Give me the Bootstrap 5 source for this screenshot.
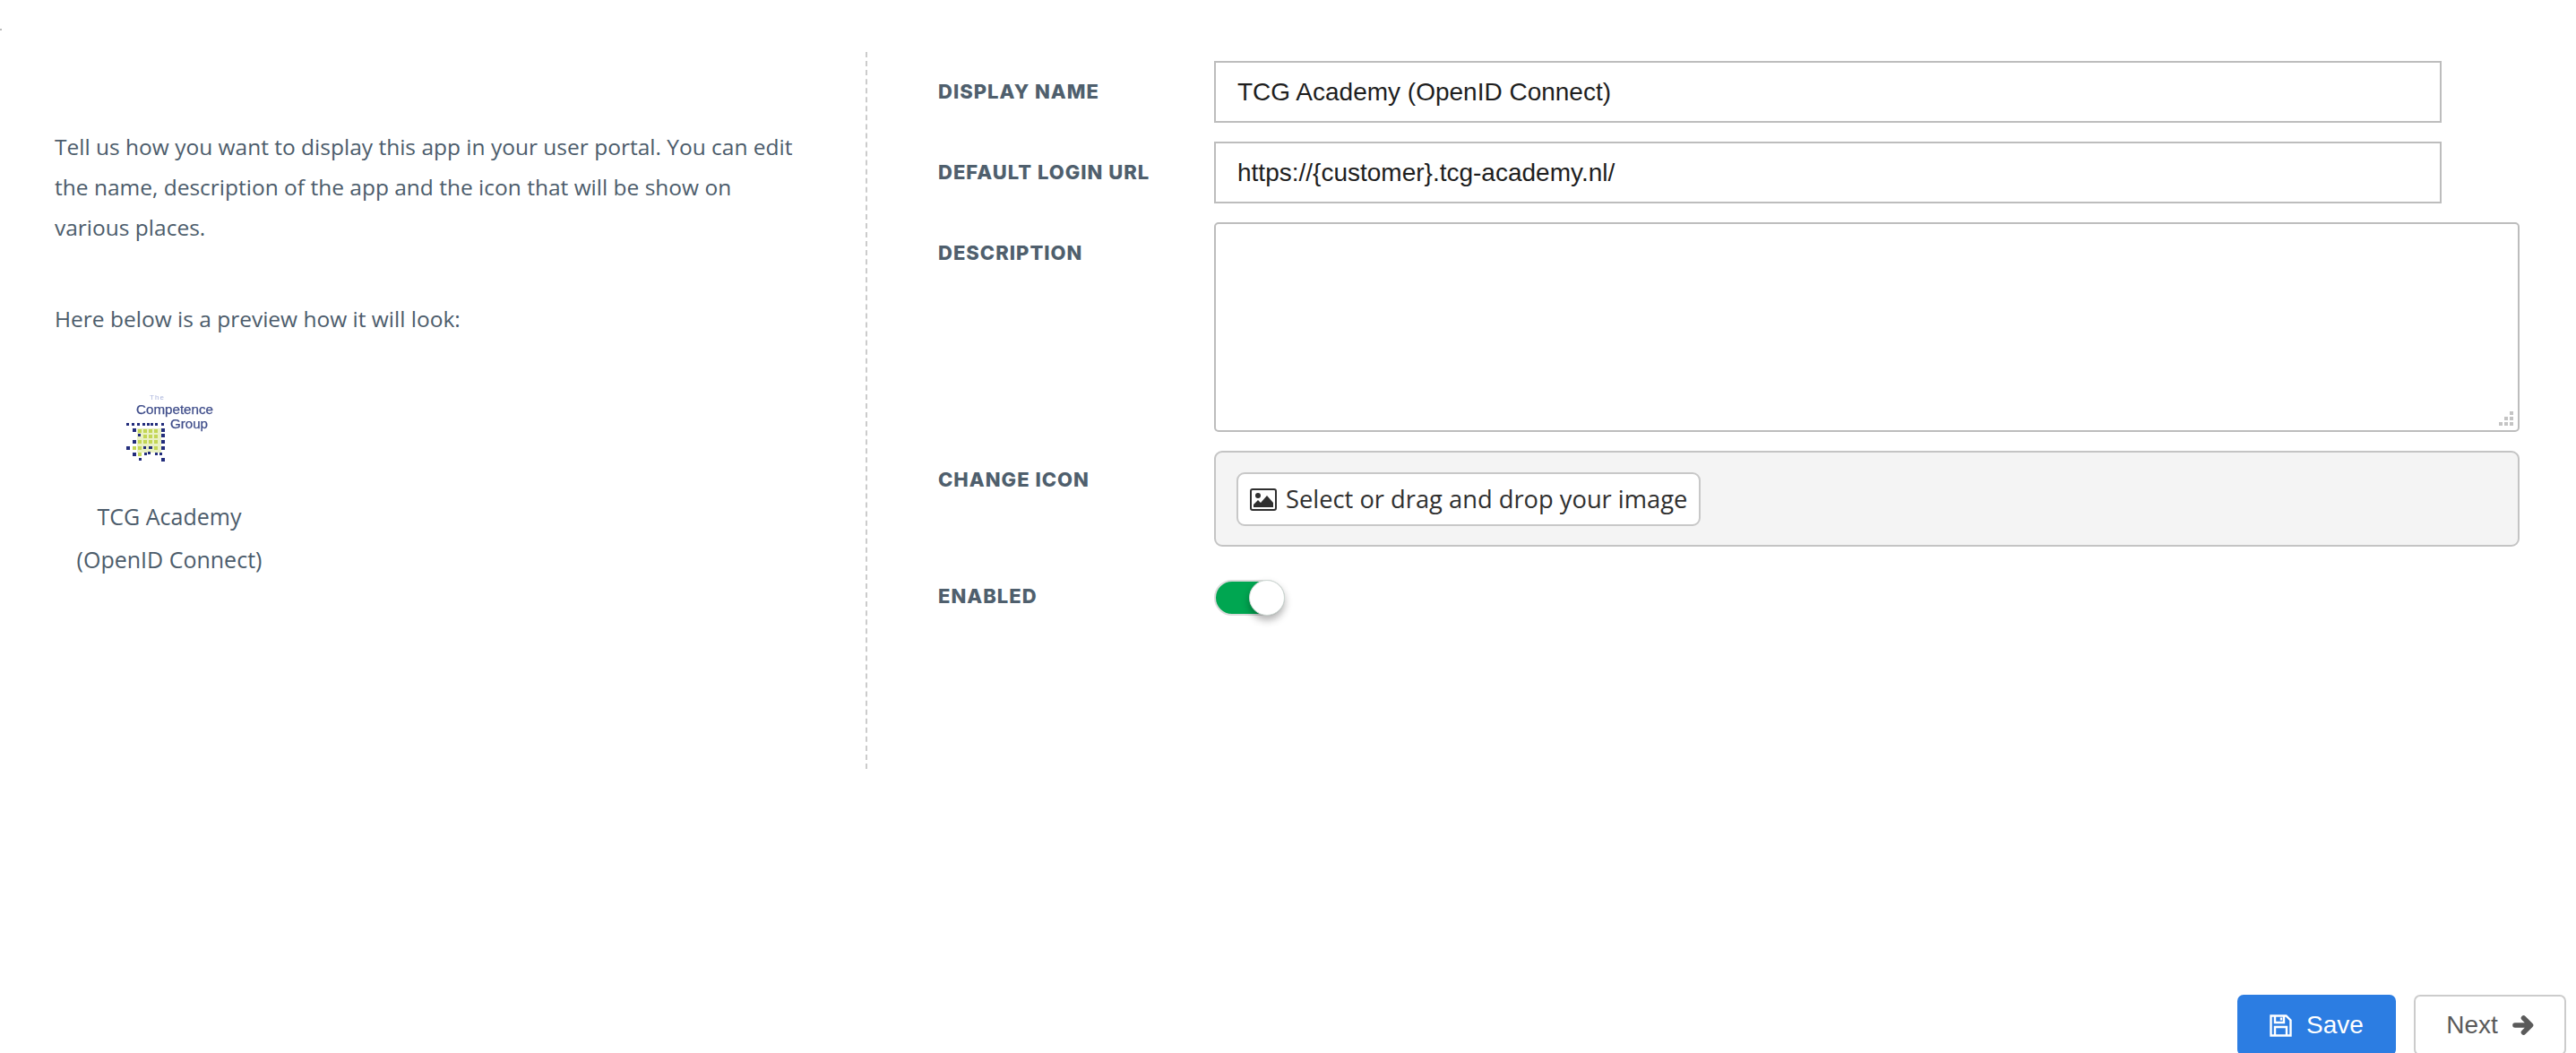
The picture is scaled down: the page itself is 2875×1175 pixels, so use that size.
<!DOCTYPE html>
<html lang="en">
<head>
<meta charset="utf-8">
<title>App settings</title>
<link href="https://cdn.jsdelivr.net/npm/bootstrap@5.3.0/dist/css/bootstrap.min.css" rel="stylesheet">
<style>
html,body{height:1175px;overflow:hidden;background:#fff}
body{font-family:"Open Sans",sans-serif;color:#4c5c6b;position:relative}
.tick-mark{position:absolute;left:0;top:32px;width:2px;height:2px;background:#bbb}
.page-main{margin-top:58px;height:800px}
.info-col{flex:0 0 968px;padding:84px 75px 0 61px;border-right:2px dashed #ccc;font-size:24.5px;line-height:44.8px}
.info-col p{margin:0}
.info-gap{margin-top:57.6px!important}
.preview-box{width:250px;margin-left:3px;text-align:center;margin-top:56px}
.preview-logo{display:block;width:110px;height:85px;margin:0 auto 0 71px;filter:blur(.6px)}
.preview-name{margin-top:32px;line-height:48px;font-size:25px}
.form-col{flex:1 1 auto;padding:10px 63px 0 79px}
.field-row{display:flex;margin-bottom:21px}
.field-label{flex:0 0 308px;margin:0;font-family:Inter,sans-serif;font-weight:800;font-size:22px;letter-spacing:1px;text-transform:uppercase;color:#4f5f6d;line-height:28px}
.pt-input{padding-top:20px}
.pt-area{padding-top:20px}
.pt-zone{padding-top:18px}
.pt-toggle{padding-top:20px}
.text-field{height:69px;width:1370px;border:2px solid #bdbdbd;border-radius:0;padding:0 24px;font-family:"Liberation Sans",sans-serif;font-size:28px;color:#1e1e1e}
.area-wrap{position:relative;flex:1 1 auto;height:234px}
.area-field{display:block;width:100%;height:234px;resize:none;border:2px solid #bdbdbd;border-radius:5px}
.area-grip{position:absolute;right:6px;bottom:6px;width:18px;height:18px}
.drop-zone{flex:1 1 auto;height:107px;background:#f4f4f4;border:2px solid #c4c4c4;border-radius:9px;padding:22px 23px}
.pick-btn{display:inline-flex;align-items:center;gap:10px;height:60px;padding:0 13px;background:#fff;border:2px solid #c8c8c8;border-radius:9px;font-size:27.3px;color:#2f2f2f}
.toggle-wrap{position:relative;display:block;width:79px;height:40px;margin-top:16px}
.toggle-wrap .form-check-input{width:79px;height:40px;margin:0;background-color:#00a651;background-image:none;border:2px solid #dcdcdc;border-radius:20px}
.toggle-knob{position:absolute;right:0;top:0;width:40px;height:40px;border-radius:50%;background:#fff;border:1px solid #cbd6d1;box-shadow:0 5px 8px rgba(0,0,0,.3)}
.page-foot{margin-top:252px;padding-right:11px;gap:20px}
.foot-btn{display:inline-flex;align-items:center;justify-content:center;height:68px;font-family:"Liberation Sans",sans-serif;font-size:28px;border-radius:7px;padding:0;align-self:flex-start}
.foot-save{width:177px;background:#2c7de2;border:0;color:#fff;gap:16px}
.foot-next{width:170px;background:#fff;border:2px solid #ccc;color:#5a5a5a;gap:16px}
</style>
</head>
<body>
<div class="tick-mark"></div>
<div class="d-flex page-main">
  <section class="info-col">
    <p>Tell us how you want to display this app in your user portal. You can edit the name, description of the app and the icon that will be show on various places.</p>
    <p class="info-gap">Here below is a preview how it will look:</p>
    <div class="preview-box">
      <svg class="preview-logo" viewBox="0 0 110 85" role="img" aria-label="The Competence Group logo">
        <text x="32" y="11" font-family="Liberation Sans" font-size="8" fill="#aab4dc" textLength="16">The</text>
        <text x="17" y="27" font-family="Liberation Sans" font-size="14" fill="#3f4d8a" stroke="#3f4d8a" stroke-width=".25" textLength="86" lengthAdjust="spacingAndGlyphs">Competence</text>
        <text x="55" y="43" font-family="Liberation Sans" font-size="14" fill="#3f4d8a" stroke="#3f4d8a" stroke-width=".25" textLength="42" lengthAdjust="spacingAndGlyphs">Group</text>
        <g fill="#c3d655">
          <rect x="18" y="43" width="27" height="27" opacity=".35"/>
          <rect x="19" y="44" width="4" height="4"/><rect x="25" y="44" width="4" height="4"/><rect x="31" y="44" width="4" height="4"/><rect x="37" y="44" width="4" height="4"/>
          <rect x="25" y="50" width="4" height="4"/><rect x="31" y="50" width="4" height="4"/><rect x="37" y="50" width="4" height="4"/>
          <rect x="19" y="56" width="4" height="4"/><rect x="25" y="56" width="4" height="4"/><rect x="31" y="56" width="4" height="4"/><rect x="37" y="56" width="4" height="4"/>
          <rect x="13" y="63" width="4" height="4"/><rect x="19" y="63" width="4" height="4"/><rect x="37" y="63" width="4" height="4"/>
          <rect x="19" y="70" width="4" height="4"/>
        </g>
        <g fill="#232d7c">
          <rect x="6" y="37" width="3" height="3"/><rect x="12" y="37" width="3" height="3"/><rect x="18" y="37" width="3" height="3"/><rect x="24" y="37" width="3" height="3"/><rect x="29" y="37" width="3" height="3"/><rect x="33" y="37" width="3" height="3"/><rect x="38" y="37" width="3" height="3"/><rect x="45" y="37" width="3" height="3"/>
          <rect x="13" y="43" width="4" height="4"/><rect x="45" y="43" width="4" height="4"/>
          <rect x="19" y="49" width="3" height="3"/><rect x="45" y="49" width="4" height="4"/>
          <rect x="13" y="56" width="4" height="4"/><rect x="45" y="56" width="4" height="4"/>
          <rect x="6" y="63" width="4" height="4"/><rect x="25" y="63" width="3" height="3"/><rect x="31" y="63" width="4" height="3"/><rect x="45" y="63" width="4" height="4"/>
          <rect x="13" y="70" width="4" height="4"/><rect x="26" y="70" width="3" height="3"/><rect x="30" y="69" width="3" height="3"/><rect x="38" y="70" width="3" height="3"/><rect x="43" y="70" width="3" height="3"/>
          <rect x="20" y="76" width="3" height="3"/><rect x="45" y="76" width="4" height="4"/>
        </g>
      </svg>
      <div class="preview-name">TCG Academy<br>(OpenID Connect)</div>
    </div>
  </section>
  <form class="form-col">
    <div class="field-row">
      <label class="field-label pt-input" for="f-name">Display name</label>
      <input id="f-name" class="form-control text-field" type="text" value="TCG Academy (OpenID Connect)">
    </div>
    <div class="field-row">
      <label class="field-label pt-input" for="f-url">Default login URL</label>
      <input id="f-url" class="form-control text-field" type="text" value="https://{customer}.tcg-academy.nl/">
    </div>
    <div class="field-row">
      <label class="field-label pt-area" for="f-desc">Description</label>
      <div class="area-wrap">
        <textarea id="f-desc" class="form-control area-field"></textarea>
        <svg class="area-grip" viewBox="0 0 18 18" fill="#c4c4c4" aria-hidden="true">
          <rect x="13" y="1" width="4" height="4"/><rect x="7" y="7" width="4" height="4"/><rect x="13" y="7" width="4" height="4"/><rect x="1" y="13" width="4" height="4"/><rect x="7" y="13" width="4" height="4"/><rect x="13" y="13" width="4" height="4"/>
        </svg>
      </div>
    </div>
    <div class="field-row">
      <label class="field-label pt-zone">Change icon</label>
      <div class="drop-zone">
        <button type="button" class="pick-btn">
          <svg width="30" height="25" viewBox="0 0 30 25" aria-hidden="true">
            <rect x="1" y="1" width="28" height="23" rx="2" fill="#fff" stroke="#2f2f2f" stroke-width="2"/>
            <circle cx="9" cy="8" r="3" fill="#2f2f2f"/>
            <path d="M4 21v-3l5-5 3 3 7-8 7 8v5z" fill="#2f2f2f"/>
          </svg>
          <span>Select or drag and drop your image</span>
        </button>
      </div>
    </div>
    <div class="field-row">
      <label class="field-label pt-toggle" for="f-on">Enabled</label>
      <label class="toggle-wrap">
        <input id="f-on" class="form-check-input" type="checkbox" checked>
        <span class="toggle-knob"></span>
      </label>
    </div>
  </form>
</div>
<div class="d-flex justify-content-end page-foot">
  <button type="button" class="btn foot-btn foot-save">
    <svg width="25" height="25" viewBox="0 0 25 25" fill="none" stroke="#fff" stroke-width="2.4" aria-hidden="true">
      <path d="M1.5 1.5h17l5 5v17h-22z"/>
      <path d="M6 2v7h10V2"/>
      <path d="M6 23v-9h13v9"/>
      <path d="M13 3.5v3"/>
    </svg>
    <span>Save</span>
  </button>
  <button type="button" class="btn foot-btn foot-next">
    <span>Next</span>
    <svg width="24" height="24" viewBox="0 0 24 24" aria-hidden="true">
      <path d="M3 12h16M12.5 4l8 8-8 8" fill="none" stroke="#5a5a5a" stroke-width="5.6" stroke-linecap="round" stroke-linejoin="round"/>
    </svg>
  </button>
</div>
<script src="https://cdn.jsdelivr.net/npm/bootstrap@5.3.0/dist/js/bootstrap.bundle.min.js"></script>
</body>
</html>
